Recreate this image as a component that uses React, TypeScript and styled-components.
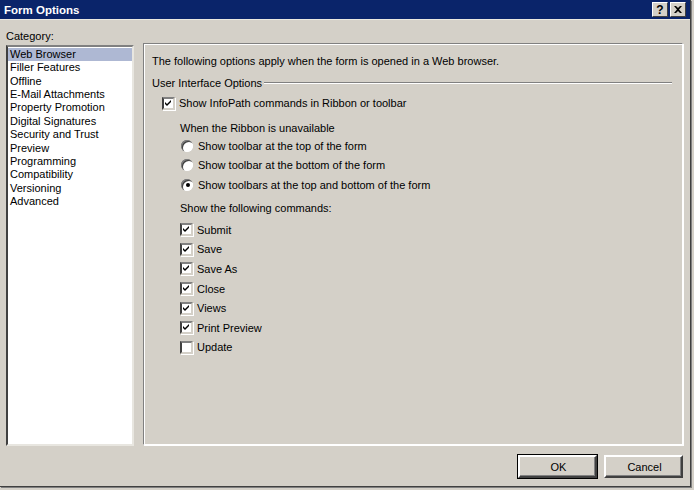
import React from "react";
import styled, { createGlobalStyle } from "styled-components";

const GlobalStyle = createGlobalStyle`
  html, body {
    margin: 0;
    padding: 0;
    background: #d4d0c8;
  }
  body {
    font-family: "Liberation Sans", Arial, sans-serif;
    font-size: 11px;
    color: #000;
  }
`;

const Frame = styled.div`
  width: 694px;
  height: 490px;
  background: #d4d0c8;
  overflow: hidden;
`;

const Window = styled.div`
  width: 690px;
  height: 486px;
  background: #d4d0c8;
  border-right: 1px solid #404040;
  border-bottom: 1px solid #404040;
  box-shadow: 1px 1px 0 #808080;
  display: flex;
  flex-direction: column;
`;

const TitleBar = styled.div`
  height: 19px;
  background: #0a246a;
  display: flex;
  align-items: center;
  padding: 0 4px;
  border-bottom: 1px solid #ece9e0;
`;

const TitleText = styled.div`
  flex: 1;
  color: #fff;
  font-weight: bold;
  font-size: 11.5px;
`;

const TitleButton = styled.div`
  width: 14px;
  height: 13px;
  background: #d4d0c8;
  border: 1px solid;
  border-color: #fff #404040 #404040 #fff;
  display: flex;
  align-items: center;
  justify-content: center;
  font-weight: bold;
  font-size: 12px;
  margin-left: 2px;
`;

const Body = styled.div`
  flex: 1;
  display: flex;
  flex-direction: column;
  padding: 0 7px 0 6px;
`;

const CategoryLabel = styled.div`
  height: 14px;
  line-height: 14px;
  margin-top: 9px;
`;

const Main = styled.div`
  display: flex;
  gap: 9px;
  align-items: flex-start;
`;

const ListBox = styled.div`
  width: 124px;
  height: 395px;
  margin-top: 2px;
  background: #fff;
  border: 2px solid;
  border-color: #808080 #e8e6e0 #e8e6e0 #404040;
  padding: 1px 0;
`;

const ListItem = styled.div<{ $selected?: boolean }>`
  height: 13.36px;
  line-height: 13.36px;
  padding-left: 2px;
  background: ${(p) => (p.$selected ? "#aeb8d3" : "transparent")};
  white-space: nowrap;
`;

const Panel = styled.div`
  flex: 1;
  height: 391px;
  border: 1px solid;
  border-color: #808080 #fff #fff #808080;
  box-shadow: inset 1px 1px 0 #fff, 1px 1px 0 #fff;
  padding: 9px 10px 0 8px;
`;

const Line = styled.div<{ $indent?: number; $top?: number }>`
  height: 16px;
  line-height: 16px;
  margin-left: ${(p) => p.$indent ?? 0}px;
  margin-top: ${(p) => p.$top ?? 0}px;
  white-space: nowrap;
`;

const GroupHeading = styled.div`
  display: flex;
  align-items: center;
  height: 16px;
  margin-top: 6px;
  gap: 2px;
`;

const GroupRule = styled.div`
  flex: 1;
  height: 0;
  border-top: 1px solid #808080;
  border-bottom: 1px solid #fff;
`;

const OptionRow = styled.div<{ $indent: number; $top?: number; $height: number }>`
  display: flex;
  align-items: center;
  gap: 4px;
  height: ${(p) => p.$height}px;
  margin-left: ${(p) => p.$indent}px;
  margin-top: ${(p) => p.$top ?? 0}px;
  white-space: nowrap;
`;

const CheckBox = styled.div`
  width: 9px;
  height: 9px;
  background: #fff;
  border: 2px solid;
  border-color: #808080 #d4d0c8 #d4d0c8 #404040;
  box-shadow: 1px 1px 0 #fff;
  display: flex;
  align-items: center;
  justify-content: center;
  flex-shrink: 0;
`;

const Radio = styled.div`
  width: 12px;
  height: 12px;
  border-radius: 50%;
  background: #fff;
  box-shadow: inset 1px 1px 0 #808080, inset 2px 2px 0 #404040,
    inset -1px -1px 0 #fff;
  display: flex;
  align-items: center;
  justify-content: center;
  margin-left: 1px;
  margin-right: 1px;
  flex-shrink: 0;
`;

const RadioDot = styled.div`
  width: 4px;
  height: 4px;
  border-radius: 50%;
  background: #000;
  margin: 1px 0 0 1px;
`;

const ButtonRow = styled.div`
  display: flex;
  justify-content: flex-end;
  gap: 7px;
  margin-top: 9px;
`;

const DialogButton = styled.div<{ $default?: boolean }>`
  width: 73px;
  height: 19px;
  display: flex;
  align-items: center;
  justify-content: center;
  background: #d4d0c8;
  border: 2px solid;
  border-color: #fff #404040 #404040 #fff;
  box-shadow: inset -1px -1px 0 #808080;
  padding-left: 2px;
  ${(p) =>
    p.$default &&
    `
    outline: 1px solid #000;
    outline-offset: 0;
  `}
`;

const Check = () => (
  <svg width="7" height="7" viewBox="0 0 7 7">
    <path d="M0 2 L2 4 L6 0 L6 2 L2 6 L0 4 Z" fill="#000" />
  </svg>
);

const CheckOption = ({
  label,
  checked,
  indent,
  top,
  height,
}: {
  label: string;
  checked: boolean;
  indent: number;
  top?: number;
  height: number;
}) => (
  <OptionRow $indent={indent} $top={top} $height={height}>
    <CheckBox>{checked && <Check />}</CheckBox>
    <span>{label}</span>
  </OptionRow>
);

const RadioOption = ({ label, selected }: { label: string; selected?: boolean }) => (
  <OptionRow $indent={28} $height={19.5}>
    <Radio>{selected && <RadioDot />}</Radio>
    <span>{label}</span>
  </OptionRow>
);

const categories = [
  "Web Browser",
  "Filler Features",
  "Offline",
  "E-Mail Attachments",
  "Property Promotion",
  "Digital Signatures",
  "Security and Trust",
  "Preview",
  "Programming",
  "Compatibility",
  "Versioning",
  "Advanced",
];

const commands = [
  { label: "Submit", checked: true },
  { label: "Save", checked: true },
  { label: "Save As", checked: true },
  { label: "Close", checked: true },
  { label: "Views", checked: true },
  { label: "Print Preview", checked: true },
  { label: "Update", checked: false },
];

export default function App() {
  return (
    <Frame>
      <GlobalStyle />
      <Window>
        <TitleBar>
          <TitleText>Form Options</TitleText>
          <TitleButton>?</TitleButton>
          <TitleButton>
            <svg width="8" height="7" viewBox="0 0 8 7">
              <path d="M0 0 L2 0 L4 2 L6 0 L8 0 L5 3.5 L8 7 L6 7 L4 5 L2 7 L0 7 L3 3.5 Z" fill="#000" />
            </svg>
          </TitleButton>
        </TitleBar>
        <Body>
          <CategoryLabel>Category:</CategoryLabel>
          <Main>
            <ListBox>
              {categories.map((c, i) => (
                <ListItem key={c} $selected={i === 0}>
                  {c}
                </ListItem>
              ))}
            </ListBox>
            <Panel>
              <Line>The following options apply when the form is opened in a Web browser.</Line>
              <GroupHeading>
                <span>User Interface Options</span>
                <GroupRule />
              </GroupHeading>
              <CheckOption
                label="Show InfoPath commands in Ribbon or toolbar"
                checked
                indent={10}
                top={2}
                height={20}
              />
              <Line $indent={28} $top={7}>
                When the Ribbon is unavailable
              </Line>
              <RadioOption label="Show toolbar at the top of the form" />
              <RadioOption label="Show toolbar at the bottom of the form" />
              <RadioOption label="Show toolbars at the top and bottom of the form" selected />
              <Line $indent={28} $top={5.5}>
                Show the following commands:
              </Line>
              {commands.map((c, i) => (
                <CheckOption
                  key={c.label}
                  label={c.label}
                  checked={c.checked}
                  indent={28}
                  top={i === 0 ? 4 : 0}
                  height={19.6}
                />
              ))}
            </Panel>
          </Main>
          <ButtonRow>
            <DialogButton $default>OK</DialogButton>
            <DialogButton>Cancel</DialogButton>
          </ButtonRow>
        </Body>
      </Window>
    </Frame>
  );
}
